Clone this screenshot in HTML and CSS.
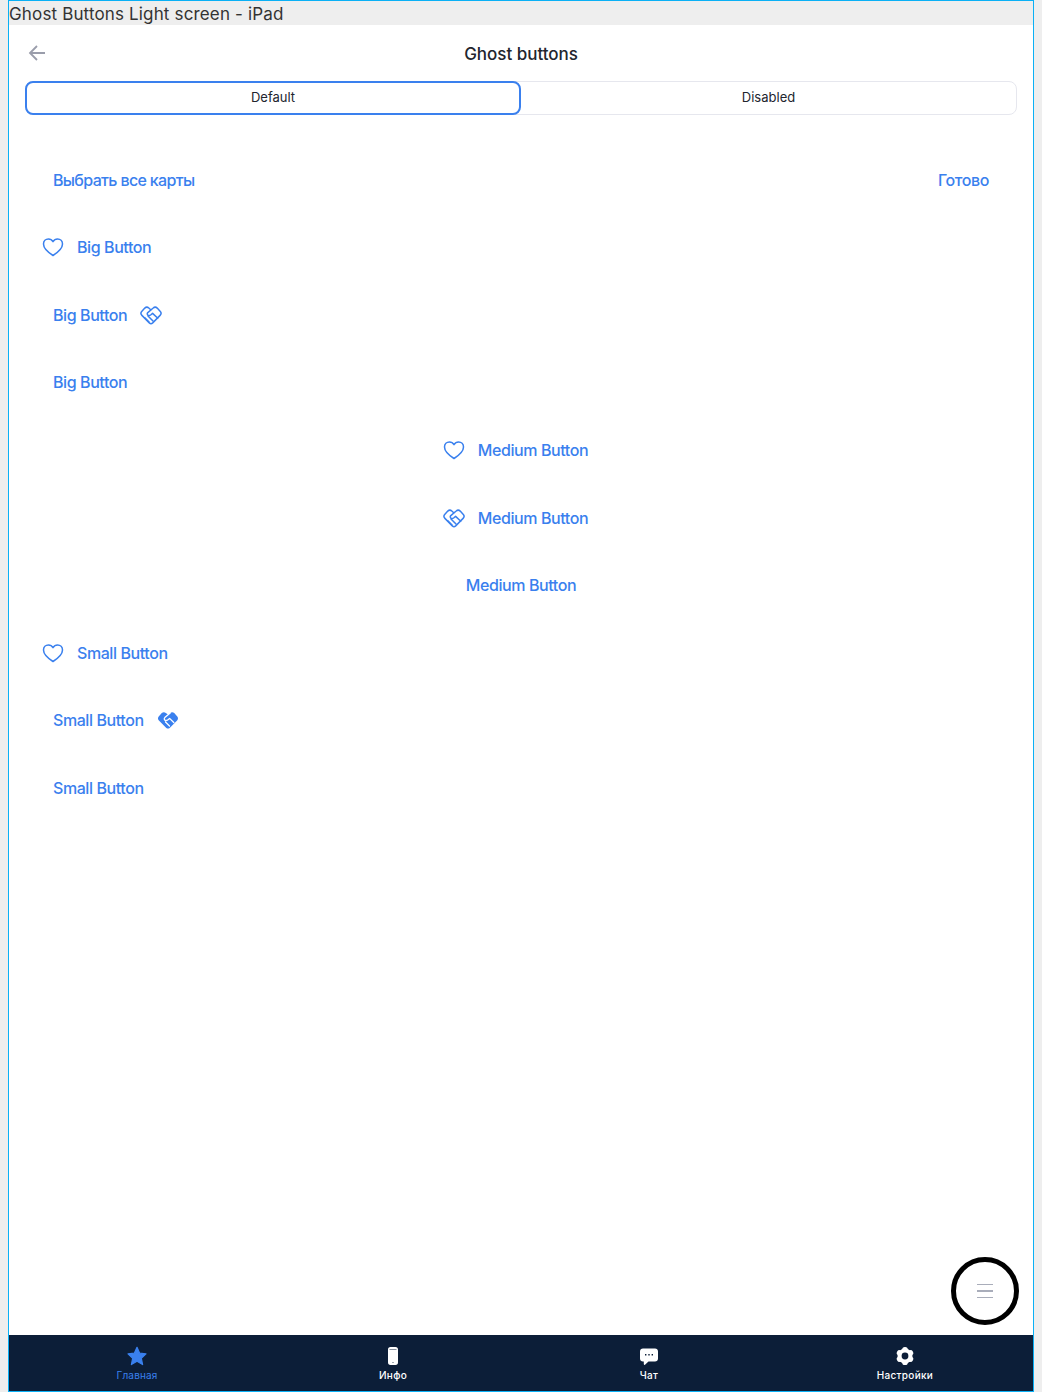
FILE: index.html
```html
<!DOCTYPE html>
<html lang="en">

<head>
    <meta charset="UTF-8">
    <meta name="viewport" content="width=device-width, initial-scale=1.0">
    <title>Ghost Buttons Light screen - iPad</title>
    <link rel="stylesheet" href="styles.css">
</head>

<body>
    <svg class="defs" width="0" height="0">
        <symbol id="heart" viewBox="0 0 24 24">
            <path d="M12 20.500C7.500 17.600 2.500 14 2.500 9 2.500 6 4.700 4 7.400 4c1.900 0 3.600 1 4.600 2.700C13 5 14.700 4 16.600 4c2.700 0 4.900 2 4.900 5 0 5-5 8.600-9.500 11.500z" fill="none" stroke="currentColor" stroke-width="1.500" stroke-linejoin="round" />
        </symbol>
        <symbol id="shake" viewBox="0 0 24 24">
            <g fill="none" stroke="currentColor" stroke-width="1.500" stroke-linejoin="round" stroke-linecap="round">
                <path d="M12 7 9.800 5C8.600 3.900 6.900 4 5.800 5.100L2.900 8.200C1.700 9.500 1.700 11.200 2.900 12.400L10.300 19.900C11.300 20.800 12.700 20.800 13.700 19.900L21.100 12.400C22.300 11.200 22.300 9.500 21.100 8.200L18.200 5.100C17.100 4 15.400 3.900 14.200 5L8.800 9.600C7.900 10.500 8.200 11.800 9.200 12.300 10 12.700 10.900 12.500 11.600 12L13.600 10.400 18.800 15.300" />
                <path d="M5.800 14.800l4.200 4.200M9 13l5 5" />
            </g>
        </symbol>
        <symbol id="shake-fill" viewBox="0 0 24 24">
            <path fill="currentColor" d="M12 6.500 9.800 5C8.600 3.900 6.900 4 5.800 5.100L2.900 8.200C1.700 9.500 1.700 11.200 2.900 12.400L10.300 19.900C11.300 20.800 12.700 20.800 13.700 19.900L21.100 12.400C22.300 11.200 22.300 9.500 21.100 8.200L18.200 5.100C17.100 4 15.400 3.900 14.200 5z" />
            <path fill="none" stroke="#ffffff" stroke-width="1.300" stroke-linecap="round" stroke-linejoin="round" d="M14.200 5 8.800 9.600C7.900 10.500 8.200 11.800 9.200 12.300 10 12.700 10.900 12.500 11.600 12L13.600 10.400 17.800 14.500M9.500 14l4 4" />
        </symbol>
    </svg>

    <div class="frame">
        <div class="frame-title">Ghost Buttons Light screen - iPad</div>

        <div class="screen">
            <!-- header -->
            <div class="header">
                <svg class="back" viewBox="0 0 20 20" width="20" height="20">
                    <path d="M18 10H3M10 3l-7 7 7 7" fill="none" stroke="#9a9dab" stroke-width="1.800" />
                </svg>
                <h1>Ghost buttons</h1>
            </div>

            <div class="tabs">
                <div class="tab active">Default</div>
                <div class="tab">Disabled</div>
            </div>

            <!-- buttons -->
            <div class="list">
                <div class="row between">
                    <a class="btn ru">Выбрать все карты</a>
                    <a class="btn">Готово</a>
                </div>
                <div class="row">
                    <a class="btn with-left"><svg class="ico"><use href="#heart" /></svg>Big Button</a>
                </div>
                <div class="row">
                    <a class="btn">Big Button<svg class="ico right"><use href="#shake" /></svg></a>
                </div>
                <div class="row">
                    <a class="btn">Big Button</a>
                </div>
                <div class="row center">
                    <a class="btn with-left"><svg class="ico"><use href="#heart" /></svg>Medium Button</a>
                </div>
                <div class="row center">
                    <a class="btn with-left"><svg class="ico"><use href="#shake" /></svg>Medium Button</a>
                </div>
                <div class="row center">
                    <a class="btn">Medium Button</a>
                </div>
                <div class="row">
                    <a class="btn with-left"><svg class="ico"><use href="#heart" /></svg>Small Button</a>
                </div>
                <div class="row">
                    <a class="btn">Small Button<svg class="ico right"><use href="#shake-fill" /></svg></a>
                </div>
                <div class="row">
                    <a class="btn">Small Button</a>
                </div>
            </div>

            <div class="fab">
                <span></span><span></span><span></span>
            </div>
        </div>

        <!-- bottom nav -->
        <div class="nav">
            <div class="nav-item current">
                <svg viewBox="0 0 24 24" width="24" height="24">
                    <path fill="currentColor" stroke="currentColor" stroke-width="1.200" stroke-linejoin="round" d="M12 3.300l2.700 5.900 6.300.7-4.700 4.300 1.300 6.400-5.600-3.300-5.600 3.300 1.300-6.400L3 9.900l6.300-.7z" />
                </svg>
                <span>Главная</span>
            </div>
            <div class="nav-item">
                <svg viewBox="0 0 24 24" width="24" height="24">
                    <path fill="currentColor" fill-rule="evenodd" d="M9.500 3h5c1.700 0 2.500 1 2.500 2.800v12.400c0 1.800-.8 2.800-2.500 2.800h-5C7.800 21 7 20 7 18.200V5.800C7 4 7.800 3 9.500 3zM8.500 5v.6h7V5zM11.500 18.200v.8h1v-.8z" />
                </svg>
                <span>Инфо</span>
            </div>
            <div class="nav-item">
                <svg viewBox="0 0 24 24" width="24" height="24">
                    <path fill="currentColor" fill-rule="evenodd" d="M6 4.500h12c1.800 0 3 1.100 3 2.900v7.200c0 1.800-1.200 2.900-3 2.900h-6.500L8 20.700c-.6.500-1.200.2-1.200-.6v-2.600H6c-1.800 0-3-1.100-3-2.900V7.400c0-1.800 1.200-2.900 3-2.900zM8 10v1.400h1.400V10zM11.300 10v1.400h1.400V10zM14.600 10v1.400H16V10z" />
                </svg>
                <span>Чат</span>
            </div>
            <div class="nav-item">
                <svg viewBox="0 0 24 24" width="24" height="24">
                    <circle cx="12" cy="12" r="7.500" fill="currentColor" />
                    <rect class="lobe" x="9.200" y="3" width="5.600" height="18" rx="2.600" />
                    <rect class="lobe" x="9.200" y="3" width="5.600" height="18" rx="2.600" transform="rotate(60 12 12)" />
                    <rect class="lobe" x="9.200" y="3" width="5.600" height="18" rx="2.600" transform="rotate(120 12 12)" />
                    <circle class="hole" cx="12" cy="12" r="3.400" />
                </svg>
                <span>Настройки</span>
            </div>
        </div>
    </div>
</body>

</html>
```

FILE: styles.css
```css
* {
    margin: 0;
    padding: 0;
    box-sizing: border-box;
}

body {
    height: 1392px;
    overflow: hidden;
    background-color: #eeeeee;
    font-family: Inter, "Liberation Sans", sans-serif;
}

.defs {
    position: absolute;
}

.frame {
    display: flex;
    flex-direction: column;
    width: 1026px;
    height: 1392px;
    margin-left: 8px;
    border: 1px solid #0ab0f5;
}

.frame-title {
    height: 24px;
    overflow: hidden;
    background-color: #eeeeee;
    color: #333333;
    font-size: 17px;
    line-height: 26px;
    letter-spacing: .15px;
    white-space: nowrap;
}

.screen {
    position: relative;
    flex: 1;
    background-color: #ffffff;
}

.header {
    position: relative;
    height: 56px;
    display: flex;
    align-items: center;
    justify-content: center;
}

.header h1 {
    padding-top: 2px;
    font-size: 17px;
    font-weight: 500;
    letter-spacing: -.02px;
    color: #22252e;
}

.back {
    position: absolute;
    left: 18px;
    top: 18px;
}

.tabs {
    display: grid;
    grid-template-columns: 1fr 1fr;
    height: 34px;
    margin: 0 16px;
    border: 1px solid #e6e7ee;
    border-radius: 8px;
}

.tab {
    display: flex;
    align-items: center;
    justify-content: center;
    padding-bottom: 2px;
    font-size: 13px;
    color: #22252e;
}

.tab.active {
    margin: -1px 0 -1px -1px;
    border: 2px solid #3a80ee;
    border-radius: 8px;
}

.list {
    padding-top: 30.800px;
}

.row {
    display: flex;
    align-items: center;
    height: 67.600px;
    padding: 0 44px;
}

.row.between {
    justify-content: space-between;
}

.row.center {
    justify-content: center;
}

.btn {
    display: flex;
    align-items: center;
    font-size: 16px;
    font-weight: 500;
    letter-spacing: -.42px;
    color: #3a80ee;
    white-space: nowrap;
}

.btn.ru {
    letter-spacing: -.65px;
}

.btn.with-left {
    margin-left: -12px;
}

.ico {
    width: 24px;
    height: 24px;
    margin-right: 12px;
    flex-shrink: 0;
}

.ico.right {
    margin-right: 0;
    margin-left: 12px;
}

.fab {
    position: absolute;
    right: 14px;
    bottom: 10px;
    width: 68px;
    height: 68px;
    display: flex;
    flex-direction: column;
    align-items: center;
    justify-content: center;
    gap: 5px;
    border: 5.500px solid #000000;
    border-radius: 50%;
    background-color: #ffffff;
}

.fab span {
    width: 16px;
    height: 1.500px;
    background-color: #a9adba;
}

.nav {
    display: flex;
    height: 56px;
    background-color: #0c1e38;
}

.nav-item {
    flex: 1;
    display: flex;
    flex-direction: column;
    align-items: center;
    padding-top: 9px;
    color: #ffffff;
    font-size: 10px;
    font-weight: 500;
    line-height: 12px;
    letter-spacing: .3px;
}

.nav-item span {
    margin-top: 1px;
}

.nav-item.current {
    color: #3a80ee;
    font-weight: 400;
    letter-spacing: .15px;
}

.lobe {
    fill: currentColor;
}

.hole {
    fill: #0c1e38;
}
```
